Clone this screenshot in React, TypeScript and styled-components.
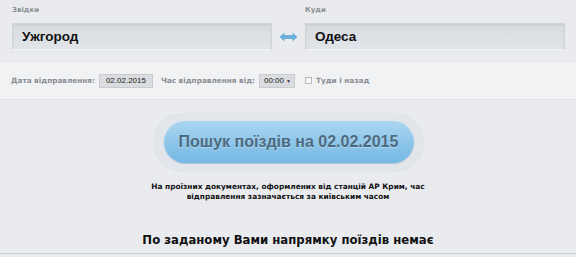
import React, { useState } from "react"
import styled, { createGlobalStyle } from "styled-components"

const GlobalStyle = createGlobalStyle`
  html, body {
    margin: 0;
    padding: 0;
    background: #e9ebef;
  }
  body {
    font-family: "DejaVu Sans", Verdana, sans-serif;
  }
`

const Page = styled.div`
  width: 576px;
  height: 257px;
  overflow: hidden;
  background: #e9ebef;
`

const Stations = styled.div`
  display: flex;
  align-items: flex-end;
  padding: 6px 11px 0 12px;
`

const Field = styled.div`
  display: flex;
  flex-direction: column;
  width: 260px;
`

const Label = styled.span`
  font-size: 7px;
  line-height: 8px;
  font-weight: bold;
  color: #8a8e93;
  margin-bottom: 9px;
`

const CityInput = styled.div`
  height: 27px;
  box-sizing: border-box;
  padding: 0 9px;
  display: flex;
  align-items: center;
  background: linear-gradient(#d7dadf, #e1e4e8);
  border: 1px solid #d0d3d8;
  border-bottom-color: #f4f5f7;
  box-shadow: inset 0 1px 2px rgba(0, 0, 0, 0.08);
  font-family: "Liberation Sans", Arial, sans-serif;
  font-size: 13.5px;
  font-weight: bold;
  color: #111;
`

const Swap = styled.button`
  width: 33px;
  height: 27px;
  padding: 0;
  border: none;
  background: none;
  display: flex;
  align-items: center;
  justify-content: center;
`

const OptionsBar = styled.div`
  margin-top: 13px;
  height: 35px;
  display: flex;
  align-items: center;
  padding: 0 11px;
  background: #f1f2f4;
  border-bottom: 1px solid #fbfbfc;
  box-shadow: 0 1px 0 #dcdfe3;
  font-size: 7.3px;
  font-weight: bold;
  color: #8a8d92;
`

const OptLabel = styled.span`
  margin-right: 4px;
`

const DateBox = styled.span`
  display: inline-flex;
  align-items: center;
  justify-content: center;
  width: 54px;
  height: 14px;
  box-sizing: border-box;
  background: #dadcdf;
  border: 1px solid #c9cbce;
  font-family: "Liberation Sans", Arial, sans-serif;
  font-weight: normal;
  font-size: 8px;
  color: #222;
  margin-right: 8px;
`

const TimeSelect = styled.span`
  display: inline-flex;
  align-items: center;
  justify-content: space-between;
  width: 36px;
  height: 14px;
  box-sizing: border-box;
  padding: 0 3px 0 4px;
  background: #dadcdf;
  border: 1px solid #c9cbce;
  font-family: "Liberation Sans", Arial, sans-serif;
  font-weight: normal;
  font-size: 8px;
  color: #222;
  margin-right: 10px;
`

const Caret = styled.span`
  font-size: 5px;
  color: #333;
`

const Check = styled.span`
  width: 7px;
  height: 7px;
  box-sizing: border-box;
  border: 1px solid #b6b8bb;
  background: #f8f8f8;
  margin-right: 4px;
`

const Main = styled.div`
  display: flex;
  flex-direction: column;
  align-items: center;
  padding-top: 15px;
`

const ButtonRing = styled.div`
  padding: 7px 9px 8px 10px;
  border-radius: 30px;
  background: #e2e6ea;
  box-shadow: 0 0 2px rgba(190, 200, 210, 0.6);
`

const SearchButton = styled.button`
  width: 250px;
  height: 42px;
  border: none;
  border-radius: 21px;
  background: linear-gradient(#acd6f1, #73b7e3);
  box-shadow: 0 1px 1px rgba(80, 130, 170, 0.35);
  font-family: "Liberation Sans", Arial, sans-serif;
  font-size: 16px;
  font-weight: bold;
  color: #4d6a80;
  text-shadow: 0 1px 0 rgba(255, 255, 255, 0.35);
  cursor: pointer;
`

const Notice = styled.p`
  margin: 11px 0 0;
  text-align: center;
  font-size: 7.4px;
  font-weight: bold;
  line-height: 10px;
  color: #111;
`

const Result = styled.h2`
  margin: 30px 0 0;
  font-family: "DejaVu Sans Condensed", "DejaVu Sans", sans-serif;
  font-size: 13px;
  line-height: 15px;
  font-weight: bold;
  color: #111;
`

const BottomRule = styled.div`
  margin-top: 6px;
  width: 100%;
  height: 1px;
  background: #c9ccd0;
`

const SwapIcon = () => (
  <svg width="19" height="10" viewBox="0 0 19 10">
    <path
      d="M0.5 5 L5.5 0.5 V3 H13.5 V0.5 L18.5 5 L13.5 9.5 V7 H5.5 V9.5 Z"
      fill="#6fb0da"
    />
  </svg>
)

export default function App() {
  const [from, setFrom] = useState("Ужгород")
  const [to, setTo] = useState("Одеса")
  const swap = () => {
    setFrom(to)
    setTo(from)
  }

  return (
    <Page>
      <GlobalStyle />
      <Stations>
        <Field>
          <Label>Звідки</Label>
          <CityInput>{from}</CityInput>
        </Field>
        <Swap onClick={swap}>
          <SwapIcon />
        </Swap>
        <Field>
          <Label>Куди</Label>
          <CityInput>{to}</CityInput>
        </Field>
      </Stations>
      <OptionsBar>
        <OptLabel>Дата відправлення:</OptLabel>
        <DateBox>02.02.2015</DateBox>
        <OptLabel>Час відправлення від:</OptLabel>
        <TimeSelect>
          00:00 <Caret>▼</Caret>
        </TimeSelect>
        <Check />
        <span>Туди і назад</span>
      </OptionsBar>
      <Main>
        <ButtonRing>
          <SearchButton>Пошук поїздів на 02.02.2015</SearchButton>
        </ButtonRing>
        <Notice>
          На проїзних документах, оформлених від станцій АР Крим, час
          <br />
          відправлення зазначається за київським часом
        </Notice>
        <Result>По заданому Вами напрямку поїздів немає</Result>
        <BottomRule />
      </Main>
    </Page>
  )
}
